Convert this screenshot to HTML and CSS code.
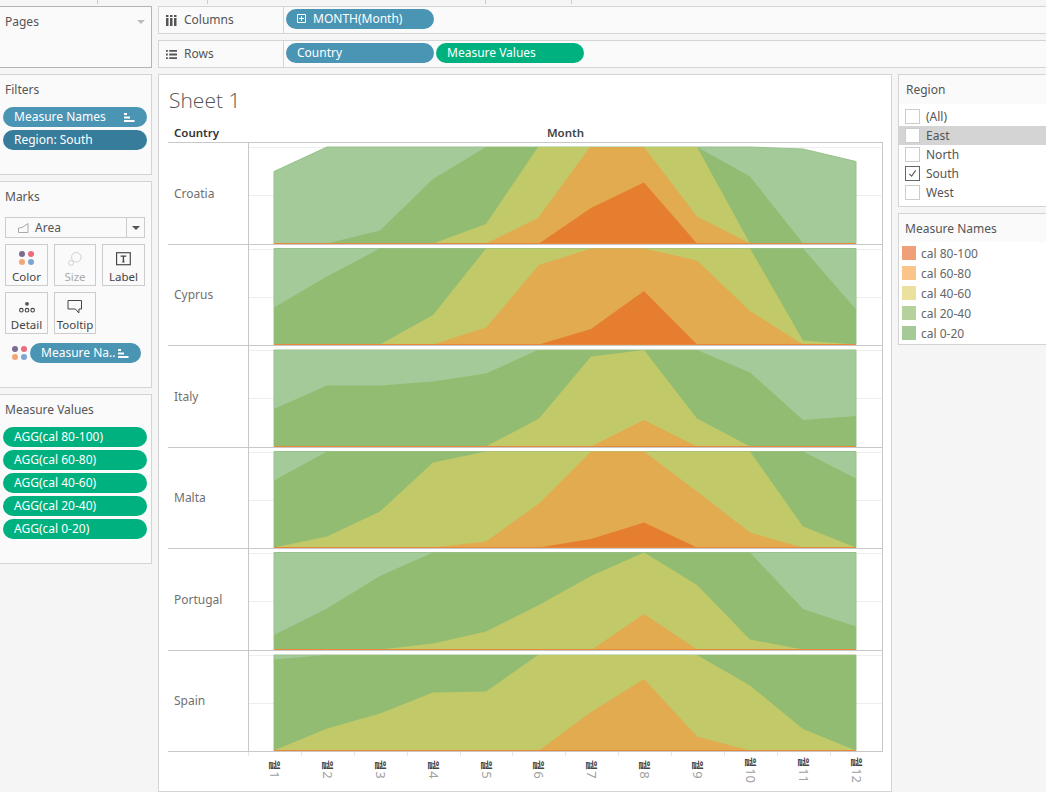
FILE: index.html
```html
<!DOCTYPE html>
<html lang="en">
<head>
  <meta charset="UTF-8">
  <title>Sheet 1</title>
  <link rel="stylesheet" href="styles.css">
</head>
<body>
  <!-- Toolbar strip, only its tick marks are visible -->
  <div class="top-strip">
    <span class="tick t1"></span><span class="tick t2"></span><span class="tick t3"></span><span class="tick t4"></span>
  </div>

  <div class="workspace">
    <!-- Left cards -->
    <aside class="left-col">
      <section class="card pages">
        <h3>Pages</h3>
        <span class="caret pages-caret"></span>
      </section>

      <section class="card filters">
        <h3>Filters</h3>
        <div class="pill-stack">
          <div class="pill blue">Measure Names
            <svg class="sort-icon" viewBox="0 0 11 10"><path d="M0 1h3v2H0zM0 4.500h6v2H0zM0 8h10.500v2H0z"/></svg>
          </div>
          <div class="pill dark-blue">Region: South</div>
        </div>
      </section>

      <section class="card marks">
        <h3>Marks</h3>
        <div class="mark-select">
          <svg class="area-icon" viewBox="0 0 11 10"><path d="M.5 9.500V5L4 4.500 10 .5v9z"/></svg>
          <span class="mark-name">Area</span>
          <span class="mark-arrow"><span class="caret dark"></span></span>
        </div>
        <div class="mark-grid">
          <div class="mark-btn">
            <span class="dots"><i class="purple"></i><i class="red"></i><i class="orange"></i><i class="sky"></i></span>
            <span>Color</span>
          </div>
          <div class="mark-btn faded">
            <svg viewBox="0 0 16 16"><circle cx="9.500" cy="6" r="5.500"/><circle cx="3.500" cy="12.500" r="2.800"/></svg>
            <span>Size</span>
          </div>
          <div class="mark-btn">
            <svg viewBox="0 0 14 12"><rect x=".5" y=".5" width="12" height="10.500"/><path class="t-glyph" d="M4 3.500h5M6.500 3.500v5M5.500 8.500h2"/></svg>
            <span>Label</span>
          </div>
          <div class="mark-btn">
            <svg viewBox="0 0 15 12"><circle class="solid" cx="7.500" cy="3" r="1.800"/><circle cx="2.200" cy="9" r="1.700"/><circle cx="7.500" cy="9" r="1.700"/><circle cx="12.800" cy="9" r="1.700"/></svg>
            <span>Detail</span>
          </div>
          <div class="mark-btn">
            <svg viewBox="0 0 15 14"><path d="M.5.500h13.500v8.500h-2.500l-.2 4-3.300-4H.5z"/></svg>
            <span>Tooltip</span>
          </div>
        </div>
        <div class="mark-pill-row">
          <span class="dots small"><i class="purple"></i><i class="red"></i><i class="orange"></i><i class="sky"></i></span>
          <div class="pill blue short">Measure Na..
            <svg class="sort-icon" viewBox="0 0 11 10"><path d="M0 1h3v2H0zM0 4.500h6v2H0zM0 8h10.500v2H0z"/></svg>
          </div>
        </div>
      </section>

      <section class="card values">
        <h3>Measure Values</h3>
        <div class="pill-stack">
          <div class="pill green">AGG(cal 80-100)</div>
          <div class="pill green">AGG(cal 60-80)</div>
          <div class="pill green">AGG(cal 40-60)</div>
          <div class="pill green">AGG(cal 20-40)</div>
          <div class="pill green">AGG(cal 0-20)</div>
        </div>
      </section>
    </aside>

    <!-- Shelves -->
    <div class="shelves">
      <div class="shelf">
        <div class="shelf-name">
          <svg class="shelf-icon" viewBox="0 0 11 11"><path d="M0 0h2.500v2H0zM4 0h2.500v2H4zM8 0h2.500v2H8zM0 3h2.500v8H0zM4 3h2.500v8H4zM8 3h2.500v8H8z"/></svg>
          <span>Columns</span>
        </div>
        <div class="shelf-pills">
          <div class="pill blue shelf-pill">
            <svg class="plus-icon" viewBox="0 0 9 9"><path d="M.5.500h8v8h-8zM4.500 2v5M2 4.500h5"/></svg>
            MONTH(Month)
          </div>
        </div>
      </div>
      <div class="shelf">
        <div class="shelf-name">
          <svg class="shelf-icon" viewBox="0 0 12 10"><path d="M0 0h2v2H0zM3.500 0H12v2H3.500zM0 4h2v2H0zM3.500 4H12v2H3.500zM0 8h2v2H0zM3.500 8H12v2H3.500z"/></svg>
          <span>Rows</span>
        </div>
        <div class="shelf-pills">
          <div class="pill blue shelf-pill">Country</div>
          <div class="pill green shelf-pill">Measure Values</div>
        </div>
      </div>
    </div>

    <!-- Worksheet -->
    <main class="sheet">
      <h1>Sheet 1</h1>
      <div class="table-head">
        <div class="head-country">Country</div>
        <div class="head-month">Month</div>
      </div>
      <div class="table-body">
        <div class="row">
          <div class="row-label">Croatia</div>
          <svg class="pane" viewBox="249 143 633 101" preserveAspectRatio="none">
            <path class="grid" d="M249 147.500H882M249 195.500H882"/>
            <polygon class="c0" points="274,243.500 274,171.500 327,147 750,147 803,149 856,161.500 856,243.500"/>
            <polygon class="c1" points="327,243.500 380,230.500 433,179 486,147 697,147 750,176.500 803,243.500"/>
            <polygon class="c2" points="433,243.500 486,224 538,147 697,147 750,243.500"/>
            <polygon class="c3" points="486,243.500 538,218 590,147 644,147 697,216.500 750,243.500"/>
            <polygon class="c4" points="539,243.500 591,208 644,182.500 697,243.500"/>
            <path class="base" d="M274 243.500H856"/>
          </svg>
        </div>
        <div class="row">
          <div class="row-label">Cyprus</div>
          <svg class="pane" viewBox="249 245 633 100" preserveAspectRatio="none">
            <path class="grid" d="M249 249.500H882M249 297.500H882"/>
            <polygon class="c0" points="274,344.500 274,248.500 856,248.500 856,344.500"/>
            <polygon class="c1" points="274,344.500 274,307.500 327,276.500 380,248.500 803,248.500 856,309.500 856,344.500"/>
            <polygon class="c2" points="380,344.500 433,315 486,248.500 750,248.500 803,340.500 856,344.500"/>
            <polygon class="c3" points="433,344.500 486,327.500 539,265 591,248.500 644,248.500 697,260.500 750,311 803,344.500"/>
            <polygon class="c4" points="539,344.500 591,329 644,291 697,344.500"/>
            <path class="base" d="M274 344.500H856"/>
          </svg>
        </div>
        <div class="row">
          <div class="row-label">Italy</div>
          <svg class="pane" viewBox="249 346 633 101" preserveAspectRatio="none">
            <path class="grid" d="M249 350.500H882M249 398.500H882"/>
            <polygon class="c0" points="274,446.500 274,350 856,350 856,446.500"/>
            <polygon class="c1" points="274,446.500 274,409 327,385.500 380,385.500 433,381.500 486,373.500 538,350 697,350 750,372.500 803,420 856,416 856,446.500"/>
            <polygon class="c2" points="486,446.500 539,418.500 591,356.500 644,350 697,418.500 750,446.500"/>
            <polygon class="c3" points="591,446.500 644,420 697,446.500"/>
            <path class="base" d="M274 446.500H856"/>
          </svg>
        </div>
        <div class="row">
          <div class="row-label">Malta</div>
          <svg class="pane" viewBox="249 448 633 100" preserveAspectRatio="none">
            <path class="grid" d="M249 452.500H882M249 500.500H882"/>
            <polygon class="c0" points="274,547.500 274,451.500 856,451.500 856,547.500"/>
            <polygon class="c1" points="274,547.500 274,480.500 327,451.500 803,451.500 856,478.500 856,547.500"/>
            <polygon class="c2" points="274,547.500 327,536.500 380,511.500 433,462.500 486,451.500 750,451.500 803,526.500 856,547.500"/>
            <polygon class="c3" points="433,547.500 486,541.500 539,503.500 591,451.500 644,451.500 697,491.500 750,532.500 803,547.500"/>
            <polygon class="c4" points="539,547.500 591,539 644,522.500 697,547.500"/>
            <path class="base" d="M274 547.500H856"/>
          </svg>
        </div>
        <div class="row">
          <div class="row-label">Portugal</div>
          <svg class="pane" viewBox="249 549 633 101" preserveAspectRatio="none">
            <path class="grid" d="M249 553.500H882M249 601.500H882"/>
            <polygon class="c0" points="274,649.500 274,552.500 856,552.500 856,649.500"/>
            <polygon class="c1" points="274,649.500 274,635 327,608.500 380,576 433,552.500 750,552.500 803,609 856,626.500 856,649.500"/>
            <polygon class="c2" points="380,649.500 433,643.500 486,631.500 538,605.500 592,575.500 644,552.500 697,585 750,639.500 803,649.500"/>
            <polygon class="c3" points="592,649.500 644,614 697,649.500"/>
            <path class="base" d="M274 649.500H856"/>
          </svg>
        </div>
        <div class="row">
          <div class="row-label">Spain</div>
          <svg class="pane" viewBox="249 651 633 100" preserveAspectRatio="none">
            <path class="grid" d="M249 655.500H882M249 703.500H882"/>
            <polygon class="c0" points="274,750.500 274,655 856,655 856,750.500"/>
            <polygon class="c1" points="274,750.500 274,659.500 327,655 856,655 856,750.500"/>
            <polygon class="c2" points="274,750.500 327,728.500 380,713.500 433,692.500 486,691.500 538,655 697,655 750,685.500 803,729 856,750.500"/>
            <polygon class="c3" points="539,750.500 591,712 644,679 697,736.500 750,750.500"/>
            <path class="base" d="M274 750.500H856"/>
          </svg>
        </div>
      </div>
      <div class="axis">
        <div class="axis-cell"><span class="axis-text"><b>월</b>1</span></div>
        <div class="axis-cell"><span class="axis-text"><b>월</b>2</span></div>
        <div class="axis-cell"><span class="axis-text"><b>월</b>3</span></div>
        <div class="axis-cell"><span class="axis-text"><b>월</b>4</span></div>
        <div class="axis-cell"><span class="axis-text"><b>월</b>5</span></div>
        <div class="axis-cell"><span class="axis-text"><b>월</b>6</span></div>
        <div class="axis-cell"><span class="axis-text"><b>월</b>7</span></div>
        <div class="axis-cell"><span class="axis-text"><b>월</b>8</span></div>
        <div class="axis-cell"><span class="axis-text"><b>월</b>9</span></div>
        <div class="axis-cell"><span class="axis-text"><b>월</b>10</span></div>
        <div class="axis-cell"><span class="axis-text"><b>월</b>11</span></div>
        <div class="axis-cell"><span class="axis-text"><b>월</b>12</span></div>
      </div>
    </main>

    <!-- Right cards -->
    <aside class="right-col">
      <section class="side-card region">
        <h3>Region</h3>
        <ul class="check-list">
          <li><span class="box"></span>(All)</li>
          <li class="active"><span class="box"></span>East</li>
          <li><span class="box"></span>North</li>
          <li><span class="box on"><svg viewBox="0 0 10 10"><path d="M1.500 5.500 4 8l4.500-6.500"/></svg></span>South</li>
          <li><span class="box"></span>West</li>
        </ul>
      </section>
      <section class="side-card legend">
        <h3>Measure Names</h3>
        <ul class="legend-list">
          <li><span class="swatch s4"></span>cal 80-100</li>
          <li><span class="swatch s3"></span>cal 60-80</li>
          <li><span class="swatch s2"></span>cal 40-60</li>
          <li><span class="swatch s1"></span>cal 20-40</li>
          <li><span class="swatch s0"></span>cal 0-20</li>
        </ul>
      </section>
    </aside>
  </div>
</body>
</html>
```

FILE: styles.css
```css
* {
  box-sizing: border-box;
}
html, body {
  margin: 0;
  padding: 0;
  height: 792px;
  overflow: hidden;
}
body {
  background-color: #f5f5f5;
  font-family: "Noto Sans", Arial, sans-serif;
  font-size: 12px;
  color: #555;
}
h1, h3, ul {
  margin: 0;
  padding: 0;
  font-weight: normal;
  list-style: none;
}
h3 {
  font-size: 12px;
  line-height: 16px;
  color: #555;
}

/* Top strip */
.top-strip {
  height: 6px;
  display: flex;
}
.tick {
  width: 1px;
  height: 4px;
  background-color: #ccc;
}
.t1 { margin-left: 97px; }
.t2 { margin-left: 109px; }
.t3 { margin-left: 277px; }
.t4 { margin-left: 85px; }

.workspace {
  display: grid;
  grid-template-columns: 152px 734px 148px;
  grid-template-rows: 68px auto;
  column-gap: 6px;
}

/* Left column */
.left-col {
  grid-row: 1 / 3;
  display: flex;
  flex-direction: column;
  gap: 6px;
}
.card {
  background-color: #fafafa;
  border: 1px solid #d4d4d4;
  border-left: none;
  padding: 7px 4px 0 5px;
  position: relative;
}
.pages {
  height: 62px;
  border-color: #b4b4b4;
}
.pages-caret {
  position: absolute;
  top: 13px;
  right: 6px;
}
.filters { height: 101px; }
.marks { height: 207px; }
.values { height: 170px; }

.caret {
  display: block;
  width: 0;
  height: 0;
  border-left: 4px solid transparent;
  border-right: 4px solid transparent;
  border-top: 4px solid #bbb;
}
.caret.dark {
  border-top-color: #555;
}

.pill-stack {
  display: flex;
  flex-direction: column;
  gap: 3px;
  margin: 9px 0 0 -2px;
}
.pill {
  height: 20px;
  width: 144px;
  border-radius: 10px;
  padding: 0 0 1px 11px;
  line-height: 19px;
  color: #fff;
  font-size: 12px;
  white-space: nowrap;
  position: relative;
  display: flex;
  align-items: center;
}
.blue { background-color: #4a94b4; }
.dark-blue { background-color: #387c9c; }
.green { background-color: #00b180; }

.sort-icon {
  position: absolute;
  right: 12px;
  top: 5px;
  width: 11px;
  height: 10px;
  fill: #fff;
}

/* Marks */
.mark-select {
  margin-top: 12px;
  width: 140px;
  height: 21px;
  border: 1px solid #ccc;
  display: flex;
  align-items: center;
  padding-left: 12px;
  color: #555;
}
.area-icon {
  width: 11px;
  height: 10px;
  fill: none;
  stroke: #aaa;
}
.mark-name {
  margin-left: 6px;
  flex: 1;
}
.mark-arrow {
  width: 18px;
  height: 100%;
  border-left: 1px solid #ccc;
  display: flex;
  align-items: center;
  justify-content: center;
}
.mark-grid {
  display: grid;
  grid-template-columns: 43px 42px 43px;
  grid-auto-rows: 42px;
  gap: 6px;
  margin-top: 6px;
}
.mark-btn {
  border: 1px solid #ccc;
  display: flex;
  flex-direction: column;
  align-items: center;
  justify-content: flex-end;
  font-size: 11.500px;
  line-height: 15px;
  color: #444;
  padding-bottom: 1px;
  white-space: nowrap;
}
.mark-btn svg {
  width: 16px;
  height: 14px;
  margin-bottom: 3px;
  fill: none;
  stroke: #444;
}
.mark-btn .solid {
  fill: #555;
  stroke: none;
}
.mark-btn .t-glyph {
  stroke-width: 1.200;
}
.mark-btn.faded {
  color: #aaa;
}
.mark-btn.faded svg {
  stroke: #ccc;
}
.dots {
  display: grid;
  grid-template-columns: 6px 6px;
  gap: 2px 3px;
  margin-bottom: 4px;
}
.dots i {
  display: block;
  width: 6px;
  height: 6px;
  border-radius: 50%;
}
.purple { background-color: #7f6b92; }
.red { background-color: #ec6b7c; }
.orange { background-color: #f2a778; }
.sky { background-color: #7ea6d3; }

.mark-pill-row {
  display: flex;
  align-items: center;
  margin-top: 9px;
  padding-left: 7px;
}
.mark-pill-row .dots {
  margin: 0 3px 0 0;
}
.pill.short {
  width: 111px;
}

/* Shelves */
.shelves {
  grid-column: 2 / 4;
  width: 888px;
}
.shelf {
  height: 28px;
  background-color: #fafafa;
  border: 1px solid #d4d4d4;
  border-right: none;
  display: flex;
  margin-bottom: 6px;
}
.shelf-name {
  width: 125px;
  border-right: 1px solid #d4d4d4;
  display: flex;
  align-items: center;
  gap: 7px;
  padding-left: 7px;
  color: #555;
}
.shelf-name span {
  margin-top: -2px;
}
.shelf-icon {
  width: 11px;
  height: 11px;
  fill: #555;
}
.shelf-pills {
  display: flex;
  gap: 2px;
  padding: 2px 0 0 2px;
}
.shelf-pill {
  width: 148px;
}
.plus-icon {
  width: 9px;
  height: 9px;
  margin-right: 7px;
  fill: none;
  stroke: #fff;
}

/* Sheet */
.sheet {
  width: 734px;
  height: 718px;
  background-color: #fff;
  border: 1px solid #d4d4d4;
  padding-left: 9px;
}
.sheet h1 {
  font-family: "Open Sans", sans-serif;
  font-weight: 300;
  font-size: 21px;
  line-height: 27px;
  margin: 12px 0 0 1px;
  color: #555;
}
.table-head {
  display: flex;
  width: 715px;
  height: 29px;
  padding-top: 11px;
  font-size: 11.500px;
  font-weight: 600;
  line-height: 16px;
  color: #333;
  border-bottom: 1px solid #c8c8c8;
}
.head-country {
  width: 80px;
  padding-left: 6px;
}
.head-month {
  flex: 1;
  text-align: center;
  color: #444;
}
.table-body {
  width: 715px;
  border-right: 1px solid #c8c8c8;
}
.row {
  display: flex;
  height: 102px;
  border-bottom: 1px solid #c8c8c8;
}
.row:nth-child(even) {
  height: 101px;
}
.row-label {
  width: 81px;
  padding: 0 0 1px 6px;
  border-right: 1px solid #c8c8c8;
  display: flex;
  align-items: center;
  color: #707070;
}
.pane {
  width: 633px;
  height: 100%;
  display: block;
}
.grid {
  stroke: #eee;
  fill: none;
}
.c0 { fill: #a3ca98; stroke: #97c28b; stroke-width: 1; }
.c1 { fill: #91bc72; }
.c2 { fill: #c2c968; }
.c3 { fill: #e2ab50; }
.c4 { fill: #e57f2f; }
.base {
  stroke: #e8893a;
  stroke-width: 1;
  fill: none;
}

/* Axis labels */
.axis {
  display: grid;
  grid-template-columns: repeat(12, 52.900px);
  margin-left: 80px;
}
.axis-cell {
  height: 34px;
  display: flex;
  justify-content: center;
  align-items: center;
  position: relative;
  padding-top: 1px;
}
.axis-cell::before {
  content: "";
  position: absolute;
  left: 0;
  top: 0;
  width: 1px;
  height: 4px;
  background-color: #e6e6e6;
}
.axis-text {
  writing-mode: vertical-rl;
  text-orientation: sideways;
  font-size: 13px;
  line-height: 11px;
  color: #a0a0a0;
  white-space: nowrap;
}
.axis-text b {
  font-family: "Noto Sans CJK KR", sans-serif;
  font-size: 11px;
  font-weight: 700;
  color: #444;
  margin-bottom: 1px;
}

/* Right column */
.right-col {
  display: flex;
  flex-direction: column;
  gap: 6px;
}
.side-card {
  background-color: #fafafa;
  border: 1px solid #d4d4d4;
  border-right: none;
  width: 148px;
}
.side-card h3 {
  padding: 7px 0 0 7px;
}
.region { height: 133px; }
.region h3 { height: 29px; }
.legend { height: 132px; }
.legend h3 { height: 28px; padding-left: 6px; }

.check-list {
  background-color: #fff;
  padding-top: 3px;
  height: 102px;
}
.check-list li {
  height: 19px;
  display: flex;
  align-items: center;
  padding-left: 6px;
  gap: 6px;
  color: #555;
}
.check-list li.active {
  background-color: #d4d4d4;
}
.box {
  width: 15px;
  height: 15px;
  background-color: #fff;
  border: 1px solid #ccc;
  display: block;
}
.box.on {
  border-color: #666;
  padding: 2px;
}
.box svg {
  display: block;
  fill: none;
  stroke: #555;
  stroke-width: 1.200;
}

.legend-list {
  background-color: #fff;
  height: 102px;
  padding: 4px 0 0 3px;
  display: flex;
  flex-direction: column;
  gap: 6px;
}
.legend-list li {
  height: 14px;
  display: flex;
  align-items: center;
  gap: 5px;
  color: #666;
}
.swatch {
  width: 14px;
  height: 14px;
  display: block;
}
.s4 { background-color: #f0a079; }
.s3 { background-color: #fbc48b; }
.s2 { background-color: #ece09f; }
.s1 { background-color: #b6d19b; }
.s0 { background-color: #a5ca98; }
```
